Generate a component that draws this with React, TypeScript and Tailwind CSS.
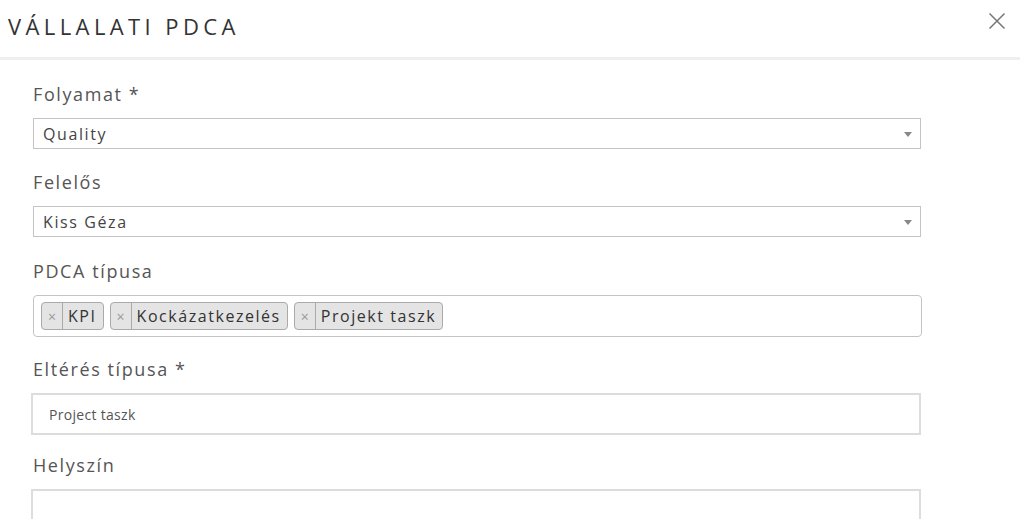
import React from 'react';

const font = { fontFamily: '"Open Sans", "Noto Sans", sans-serif' };

const Label: React.FC<{ text: string }> = ({ text }) => (
  <div className="h-[24px] leading-[24px] text-[18px] tracking-[1.6px] text-[#555] mb-[12px]">{text}</div>
);

const Select: React.FC<{ value: string }> = ({ value }) => (
  <div className="relative h-[31px] w-[888px] border border-[#c4c4c4] flex items-center pl-[9px] text-[16px] tracking-[1.6px] text-[#444]">
    {value}
    <span className="absolute right-[8px] top-[13px] w-0 h-0 border-l-[4px] border-r-[4px] border-t-[5px] border-l-transparent border-r-transparent border-t-[#888]" />
  </div>
);

const Tag: React.FC<{ text: string }> = ({ text }) => (
  <div className="flex h-[28px] items-stretch rounded-[4px] border border-[#aaa] bg-[#e4e4e4] text-[#333]">
    <span className="w-[21px] flex items-center justify-center border-r border-[#aaa] text-[#999] text-[14px]">×</span>
    <span className="pl-[5px] pr-[6px] flex items-center text-[16px] tracking-[1.55px]">{text}</span>
  </div>
);

export default function App() {
  return (
    <div className="w-[1033px] h-[519px] bg-white overflow-hidden" style={font}>
      <div className="w-[1020px] h-[60px] border-b-[3px] border-[#efefef] flex items-center justify-between pl-[8px] pr-[14px] pb-[4px]">
        <span className="text-[22px] tracking-[4.4px] text-[#333]">VÁLLALATI PDCA</span>
        <svg width="18" height="18" viewBox="0 0 18 18" className="mb-[12px]">
          <path d="M1.5 1.5 L16.5 16.5 M16.5 1.5 L1.5 16.5" stroke="#777" strokeWidth="1.5" fill="none" />
        </svg>
      </div>

      <div className="pl-[33px] pt-[22px]">
        <Label text="Folyamat *" />
        <Select value="Quality" />

        <div className="mt-[21px]">
          <Label text="Felelős" />
          <Select value="Kiss Géza" />
        </div>

        <div className="mt-[22px]">
          <Label text="PDCA típusa" />
          <div className="h-[42px] w-[889px] border border-[#c4c4c4] rounded-[4px] flex items-center gap-[6px] pl-[7px]">
            <Tag text="KPI" />
            <Tag text="Kockázatkezelés" />
            <Tag text="Projekt taszk" />
          </div>
        </div>

        <div className="mt-[20px]">
          <Label text="Eltérés típusa *" />
          <div className="h-[42px] w-[890px] -ml-[2px] border-2 border-[#dcdcdc] flex items-center pl-[16px] text-[14px] tracking-[0.3px] text-[#555]">
            Project taszk
          </div>
        </div>

        <div className="mt-[18px]">
          <Label text="Helyszín" />
          <div className="h-[42px] w-[890px] -ml-[2px] border-2 border-[#dcdcdc]" />
        </div>
      </div>
    </div>
  );
}
